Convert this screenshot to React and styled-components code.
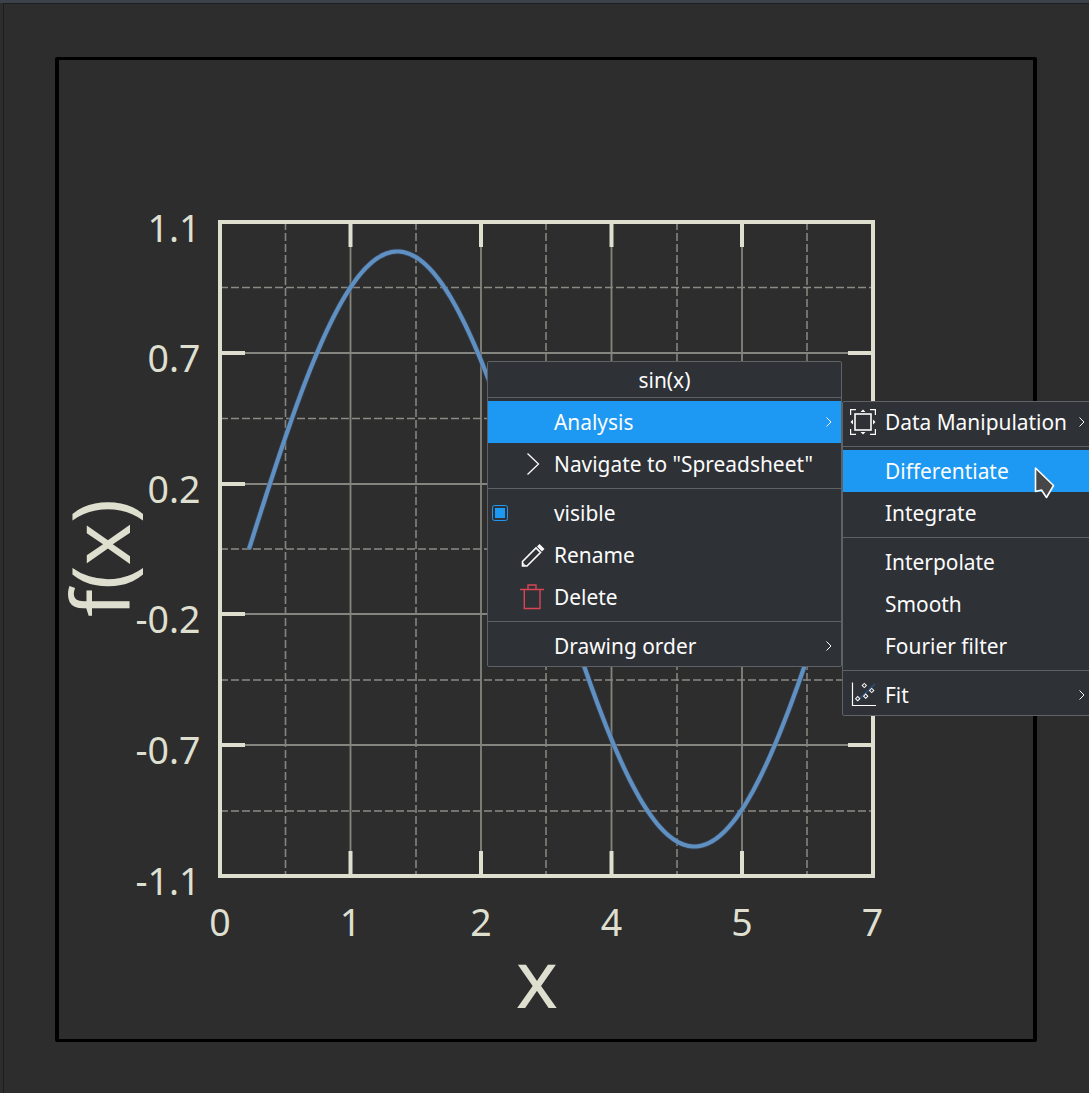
import React from "react";
import styled, { createGlobalStyle } from "styled-components";

const Global = createGlobalStyle`
  html, body { margin: 0; padding: 0; background: #2d2d2d; }
  body { width: 1089px; height: 1093px; overflow: hidden; font-family: "Noto Sans", sans-serif; }
`;

const Page = styled.div`
  position: relative;
  width: 1089px;
  height: 1093px;
  overflow: hidden;
  background: #2d2d2d;
`;
const TitleEdge = styled.div`
  height: 3px;
  background: #3b4249;
`;
const Window = styled.div`
  box-sizing: border-box;
  height: 1090px;
  border-top: 1px solid #1b1e20;
  border-left: 1px solid #1b1e20;
  margin-left: 3px;
  padding: 53px 0 0 51px;
`;
const Frame = styled.div`
  box-sizing: border-box;
  width: 982px;
  height: 985px;
  border-style: solid;
  border-color: #000;
  border-width: 3px 4px;
  border-radius: 2px;
  background: #2d2d2d;
`;
const Plot = styled.svg`
  display: block;
  width: 974px;
  height: 979px;
  font-family: "Noto Sans", sans-serif;
`;
const Menu = styled.div`
  position: absolute;
  left: ${(p) => p.$left}px;
  top: ${(p) => p.$top}px;
  width: ${(p) => p.$width}px;
  box-sizing: border-box;
  background: #2e3136;
  border: 1px solid #5e6165;
  border-radius: 2px;
  color: #fcfcfc;
  font-size: 20.9px;
`;
const MenuTitle = styled.div`
  height: 35px;
  line-height: 36px;
  text-align: center;
`;
const Separator = styled.div`
  height: 1px;
  margin: ${(p) => (p.$flush ? "0" : "3px")} 0 3px;
  background: #5e6165;
`;
const Row = styled.div`
  display: flex;
  align-items: center;
  height: 42px;
  padding-bottom: 1px;
  box-sizing: border-box;
  background: ${(p) => (p.$active ? "#1d99f3" : "transparent")};
  white-space: nowrap;
`;
const FirstRow = styled(Row)`
  height: 41px;
`;
const LastRow = styled(Row)`
  height: 41px;
  padding: 1px 0 0;
`;
const IconSlot = styled.span`
  flex: none;
  box-sizing: border-box;
  display: flex;
  align-items: center;
  width: ${(p) => p.$w}px;
  padding-left: ${(p) => p.$pad || 0}px;
`;
const Label = styled.span`
  flex: 1;
`;
const Arrow = styled.svg`
  flex: none;
  width: 8px;
  height: 12px;
  margin-right: ${(p) => p.$right}px;
`;
const Cursor = styled.svg`
  position: absolute;
  left: 1033px;
  top: 466px;
  width: 24px;
  height: 36px;
`;

const PL = 220, PR = 873, PT = 222, PB = 876;
const xs = [220, 350.5, 481, 611.5, 742, 872.5];
const ys = [222, 353, 484, 614, 745, 876];
const xm = [285.5, 416, 546, 677, 807];
const ym = [287.5, 418.5, 549, 680, 811];
const ink = "#dfdfd0";

function curve() {
  const p = [];
  for (let x = 249; x <= 843; x += 3) {
    const y = 549 - 297.5 * Math.sin((x - 249) / 94.5);
    p.push(`${x},${y.toFixed(1)}`);
  }
  return p.join(" ");
}

const yLabels = [["1.1", 230], ["0.7", 360], ["0.2", 491], ["-0.2", 621], ["-0.7", 752], ["-1.1", 883]];
const xLabels = ["0", "1", "2", "4", "5", "7"];

function Chart() {
  return (
    <Plot viewBox="59 60 974 979">
      {xm.map((x) => (
        <line key={x} x1={x} y1={PT} x2={x} y2={PB} stroke="#85857f" strokeWidth="1.6" strokeDasharray="8 3" />
      ))}
      {ym.map((y) => (
        <line key={y} x1={PL} y1={y} x2={PR} y2={y} stroke="#8b8b85" strokeWidth="1.6" strokeDasharray="8 3" />
      ))}
      {xs.slice(1, 5).map((x) => (
        <line key={x} x1={x} y1={PT} x2={x} y2={PB} stroke="#85857f" strokeWidth="1.8" />
      ))}
      {ys.slice(1, 5).map((y) => (
        <line key={y} x1={PL} y1={y} x2={PR} y2={y} stroke="#85857f" strokeWidth="1.8" />
      ))}
      <polyline points={curve()} fill="none" stroke="#3f4a66" strokeWidth="6" strokeLinejoin="round" opacity="0.5" />
      <polyline points={curve()} fill="none" stroke="#5f90c2" strokeWidth="4.2" strokeLinejoin="round" />
      <rect x={PL} y={PT} width={PR - PL} height={PB - PT} fill="none" stroke={ink} strokeWidth="4" />
      {xs.slice(1, 5).map((x) => (
        <g key={x}>
          <line x1={x} y1={PT} x2={x} y2={PT + 25} stroke={ink} strokeWidth="4" />
          <line x1={x} y1={PB} x2={x} y2={PB - 25} stroke={ink} strokeWidth="4" />
        </g>
      ))}
      {ys.slice(1, 5).map((y) => (
        <g key={y}>
          <line x1={PL} y1={y} x2={PL + 25} y2={y} stroke={ink} strokeWidth="4" />
          <line x1={PR} y1={y} x2={PR - 25} y2={y} stroke={ink} strokeWidth="4" />
        </g>
      ))}
      <g fill={ink} fontSize="37.5">
        {yLabels.map(([t, y]) => (
          <text key={t} x="200.5" y={y + 12} textAnchor="end">{t}</text>
        ))}
        {xLabels.map((t, i) => (
          <text key={t} x={xs[i]} y="936" textAnchor="middle">{t}</text>
        ))}
      </g>
      <text x="537" y="1008" fill={ink} fontSize="80" textAnchor="middle">x</text>
      <text transform="translate(130 558) rotate(-90)" fill={ink} fontSize="80" textAnchor="middle">f(x)</text>
    </Plot>
  );
}

const Chevron = ({ right }) => (
  <Arrow $right={right} viewBox="0 0 8 12">
    <path d="M1.5 1.5 L6 6 L1.5 10.5" fill="none" stroke="#fcfcfc" strokeWidth="1" />
  </Arrow>
);

const BigChevron = () => (
  <svg width="14" height="24" viewBox="0 0 14 24">
    <path d="M1.5 1.5 L12.5 12 L1.5 22.5" fill="none" stroke="#fcfcfc" strokeWidth="1.3" />
  </svg>
);

const Check = () => (
  <svg width="16" height="16" viewBox="0 0 16 16">
    <rect x="0.5" y="0.5" width="15" height="15" rx="2" fill="none" stroke="#1d99f3" />
    <rect x="3" y="3" width="10" height="10" fill="#1d99f3" />
  </svg>
);

const Pencil = () => (
  <svg width="24" height="24" viewBox="0 0 24 24">
    <path d="M1.5 18.5 L15 5 L19.5 9.5 L6 23 L1.5 23 Z" fill="none" stroke="#fcfcfc" strokeWidth="1.6" />
    <path d="M16 3.5 L18.5 1 L23.5 6 L21 8.5 Z" fill="#fcfcfc" />
    <path d="M1.5 19 L5.5 23 L1.5 23 Z" fill="#fcfcfc" opacity="0.75" />
  </svg>
);

const Trash = () => (
  <svg width="24" height="26" viewBox="0 0 24 26">
    <path d="M0 5.5 H24 M4.3 5.5 V24.5 H20 V5.5 M8 5.5 V1 H16 V5.5" fill="none" stroke="#da4453" strokeWidth="1.4" />
  </svg>
);

const Transform = () => (
  <svg width="26" height="26" viewBox="0 0 26 26" fill="none" stroke="#fcfcfc">
    <rect x="5" y="5" width="16" height="16" strokeWidth="1.6" />
    <path d="M0.6 6 V0.6 H6 M20 0.6 H25.4 V6 M25.4 20 V25.4 H20 M6 25.4 H0.6 V20" strokeWidth="1.2" />
    <path d="M13 0.5 L15.5 3 H10.5 Z M13 25.5 L15.5 23 H10.5 Z M0.5 13 L3 10.5 V15.5 Z M25.5 13 L23 10.5 V15.5 Z" fill="#fcfcfc" stroke="none" />
  </svg>
);

const FitIcon = () => (
  <svg width="25" height="26" viewBox="0 0 25 26" fill="none">
    <path d="M1.5 0.5 V23.5 H25" stroke="#fcfcfc" strokeWidth="1.2" />
    <path d="M6 19 L24 2" stroke="#2c4a6e" strokeWidth="2" />
    <g fill="#2e3136" stroke="#fcfcfc" strokeWidth="1">
      <rect x="5.2" y="15.2" width="3" height="3" transform="rotate(45 6.7 16.7)" />
      <rect x="13.2" y="12.7" width="3" height="3" transform="rotate(45 14.7 14.2)" />
      <rect x="11.8" y="2" width="3" height="3" transform="rotate(45 13.3 3.5)" />
      <rect x="19.2" y="7" width="3" height="3" transform="rotate(45 20.7 8.5)" />
    </g>
  </svg>
);

export default function App() {
  return (
    <Page>
      <Global />
      <TitleEdge />
      <Window>
        <Frame>
          <Chart />
        </Frame>
      </Window>

      <Menu $left={487} $top={361} $width={355}>
        <MenuTitle>sin(x)</MenuTitle>
        <Separator $flush />
        <Row $active>
          <IconSlot $w={66} />
          <Label>Analysis</Label>
          <Chevron right={8} />
        </Row>
        <Row>
          <IconSlot $w={66} $pad={38}><BigChevron /></IconSlot>
          <Label>Navigate to "Spreadsheet"</Label>
        </Row>
        <Separator />
        <Row>
          <IconSlot $w={66} $pad={4}><Check /></IconSlot>
          <Label>visible</Label>
        </Row>
        <Row>
          <IconSlot $w={66} $pad={33}><Pencil /></IconSlot>
          <Label>Rename</Label>
        </Row>
        <Row>
          <IconSlot $w={66} $pad={32}><Trash /></IconSlot>
          <Label>Delete</Label>
        </Row>
        <Separator />
        <LastRow>
          <IconSlot $w={66} />
          <Label>Drawing order</Label>
          <Chevron right={8} />
        </LastRow>
      </Menu>

      <Menu $left={842} $top={401} $width={260}>
        <FirstRow>
          <IconSlot $w={42} $pad={7}><Transform /></IconSlot>
          <Label>Data Manipulation</Label>
          <Chevron right={15} />
        </FirstRow>
        <Separator />
        <Row $active>
          <IconSlot $w={42} />
          <Label>Differentiate</Label>
        </Row>
        <Row>
          <IconSlot $w={42} />
          <Label>Integrate</Label>
        </Row>
        <Separator />
        <Row>
          <IconSlot $w={42} />
          <Label>Interpolate</Label>
        </Row>
        <Row>
          <IconSlot $w={42} />
          <Label>Smooth</Label>
        </Row>
        <Row>
          <IconSlot $w={42} />
          <Label>Fourier filter</Label>
        </Row>
        <Separator />
        <LastRow>
          <IconSlot $w={42} $pad={8}><FitIcon /></IconSlot>
          <Label>Fit</Label>
          <Chevron right={15} />
        </LastRow>
      </Menu>

      <Cursor viewBox="0 0 24 36">
        <path d="M2.5 2 V25.5 L8.5 24 L13.5 31.5 L20.5 19.5 Z" fill="#474747" stroke="#fcfcfc" strokeWidth="1.6" strokeLinejoin="round" />
      </Cursor>
    </Page>
  );
}
